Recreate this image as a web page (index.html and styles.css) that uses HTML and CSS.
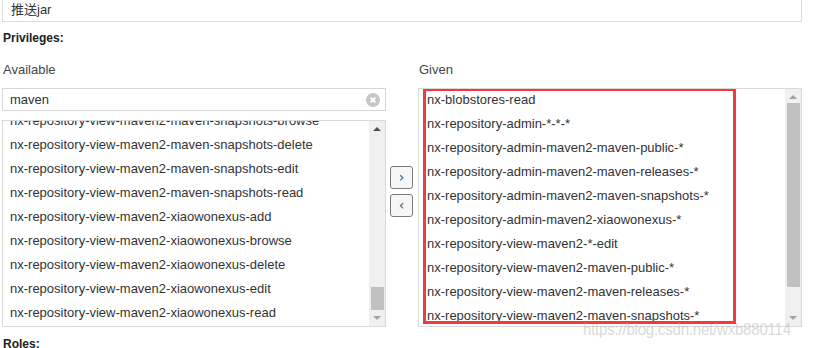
FILE: index.html
```html
<!DOCTYPE html>
<html>
<head>
<meta charset="utf-8">
<link rel="stylesheet" href="styles.css">
</head>
<body>
<div class="page">
  <div class="top-field">推送jar</div>
  <div class="section-title">Privileges:</div>
  <div class="dual">
    <div class="col col-left">
      <div class="col-label">Available</div>
      <div class="search">
        <span class="search-text">maven</span>
        <span class="clear"><svg width="14" height="14" viewBox="0 0 14 14"><circle cx="7" cy="7" r="7" fill="#c6c6c6"/><path d="M4.6 4.6 L9.4 9.4 M9.4 4.6 L4.6 9.4" stroke="#fff" stroke-width="2"/></svg></span>
      </div>
      <div class="list list-avail">
        <div class="list-inner scrolled">
          <div class="item">nx-repository-view-maven2-maven-snapshots-browse</div>
          <div class="item">nx-repository-view-maven2-maven-snapshots-delete</div>
          <div class="item">nx-repository-view-maven2-maven-snapshots-edit</div>
          <div class="item">nx-repository-view-maven2-maven-snapshots-read</div>
          <div class="item">nx-repository-view-maven2-xiaowonexus-add</div>
          <div class="item">nx-repository-view-maven2-xiaowonexus-browse</div>
          <div class="item">nx-repository-view-maven2-xiaowonexus-delete</div>
          <div class="item">nx-repository-view-maven2-xiaowonexus-edit</div>
          <div class="item">nx-repository-view-maven2-xiaowonexus-read</div>
        </div>
        <div class="scrollbar sb-avail">
          <span class="arrow up"></span>
          <span class="track"><span class="thumb thumb-avail"></span></span>
          <span class="arrow down"></span>
        </div>
      </div>
    </div>
    <div class="buttons">
      <button class="btn">&#8250;</button>
      <button class="btn">&#8249;</button>
    </div>
    <div class="col col-right">
      <div class="col-label">Given</div>
      <div class="list list-given">
        <div class="list-inner given-inner">
          <div class="item">nx-blobstores-read</div>
          <div class="item">nx-repository-admin-*-*-*</div>
          <div class="item">nx-repository-admin-maven2-maven-public-*</div>
          <div class="item">nx-repository-admin-maven2-maven-releases-*</div>
          <div class="item">nx-repository-admin-maven2-maven-snapshots-*</div>
          <div class="item">nx-repository-admin-maven2-xiaowonexus-*</div>
          <div class="item">nx-repository-view-maven2-*-edit</div>
          <div class="item">nx-repository-view-maven2-maven-public-*</div>
          <div class="item">nx-repository-view-maven2-maven-releases-*</div>
          <div class="item">nx-repository-view-maven2-maven-snapshots-*</div>
        </div>
        <div class="scrollbar sb-given">
          <span class="arrow up"></span>
          <span class="track"><span class="thumb thumb-given"></span></span>
          <span class="arrow down"></span>
        </div>
        <div class="highlight"></div>
      </div>
      <div class="watermark">https://blog.csdn.net/wxb880114</div>
    </div>
  </div>
  <div class="section-title roles">Roles:</div>
</div>
</body>
</html>
```

FILE: styles.css
```css
html, body {
  margin: 0;
  padding: 0;
  background: #fff;
  overflow: hidden;
}
body {
  width: 820px;
  height: 348px;
  font-family: "Liberation Sans", Arial, "Noto Sans CJK SC", sans-serif;
  font-size: 13px;
  color: #333;
}
.page {
  padding: 0 18px 0 2px;
}
.top-field {
  box-sizing: border-box;
  margin-top: -4px;
  height: 26px;
  border: 1px solid #dcdcdc;
  padding: 3px 0 0 8px;
  line-height: 20px;
  font-size: 13px;
  color: #333;
}
.section-title {
  margin-top: 8px;
  height: 16px;
  line-height: 16px;
  font-weight: bold;
  font-size: 12px;
  color: #222;
  padding-left: 1px;
}
.roles {
  margin-top: 9px;
}
.dual {
  display: flex;
  margin-top: 16px;
}
.col {
  width: 384px;
  position: relative;
}
.col-label {
  height: 16px;
  line-height: 16px;
  margin-bottom: 10px;
  font-size: 13px;
  color: #444;
  padding-left: 1px;
}
.search {
  box-sizing: border-box;
  height: 23px;
  border: 1px solid #d6d6d6;
  display: flex;
  align-items: center;
  justify-content: space-between;
  padding: 0 5px 0 7px;
}
.search-text {
  line-height: 20px;
}
.clear {
  display: flex;
}
.list {
  box-sizing: border-box;
  border: 1px solid #d9d9d9;
  position: relative;
  overflow: hidden;
  display: flex;
}
.list-avail {
  margin-top: 9px;
  height: 207px;
}
.list-given {
  height: 239px;
}
.list-inner {
  flex: 1;
  min-width: 0;
}
.scrolled {
  margin-top: -12px;
}
.given-inner {
  margin-top: -1px;
}
.item {
  height: 24px;
  line-height: 24px;
  padding-left: 7px;
  white-space: nowrap;
  color: #333;
}
.given-inner .item {
  padding-left: 8px;
}
.scrollbar {
  width: 16px;
  background: #f0f0f0;
  display: flex;
  flex-direction: column;
  align-items: center;
}
.arrow {
  width: 0;
  height: 0;
  border-left: 4px solid transparent;
  border-right: 4px solid transparent;
  flex: none;
}
.arrow.up {
  border-bottom: 4px solid #a3a3a3;
  margin: 6px 0 6px;
}
.arrow.down {
  border-top: 4px solid #a3a3a3;
  margin: 6px 0 6px;
}
.sb-avail .arrow.up {
  border-bottom-color: #505050;
}
.track {
  flex: 1;
  width: 100%;
  display: flex;
  flex-direction: column;
  align-items: center;
  justify-content: flex-end;
}
.thumb {
  width: 13px;
  background: #c1c1c1;
  display: block;
}
.thumb-avail {
  height: 23px;
}
.sb-given .track {
  justify-content: flex-start;
}
.thumb-given {
  height: 184px;
  margin-top: 1px;
}
.sb-given .arrow.up {
  margin: 6px 0 3px;
}
.buttons {
  width: 32px;
  display: flex;
  flex-direction: column;
  align-items: flex-start;
  padding: 104px 0 0 4px;
  box-sizing: border-box;
  gap: 5px;
}
.btn {
  box-sizing: border-box;
  width: 23px;
  height: 23px;
  border: 1px solid #7a7a7a;
  border-radius: 3px;
  background: #f6f6f6;
  padding: 0 0 2px;
  font-family: "DejaVu Sans", sans-serif;
  font-size: 14px;
  line-height: 18px;
  color: #2a5d8a;
}
.highlight {
  position: absolute;
  left: 4px;
  top: -1px;
  width: 313px;
  height: 236px;
  box-sizing: border-box;
  border: 3px solid #f23a3a;
  pointer-events: none;
}
.watermark {
  position: absolute;
  left: 165px;
  top: 258px;
  font-family: "Liberation Sans", Arial, sans-serif;
  font-size: 15px;
  letter-spacing: -0.2px;
  transform: scaleY(1.1);
  transform-origin: left top;
  color: rgba(185, 185, 185, 0.55);
  white-space: nowrap;
}
```
